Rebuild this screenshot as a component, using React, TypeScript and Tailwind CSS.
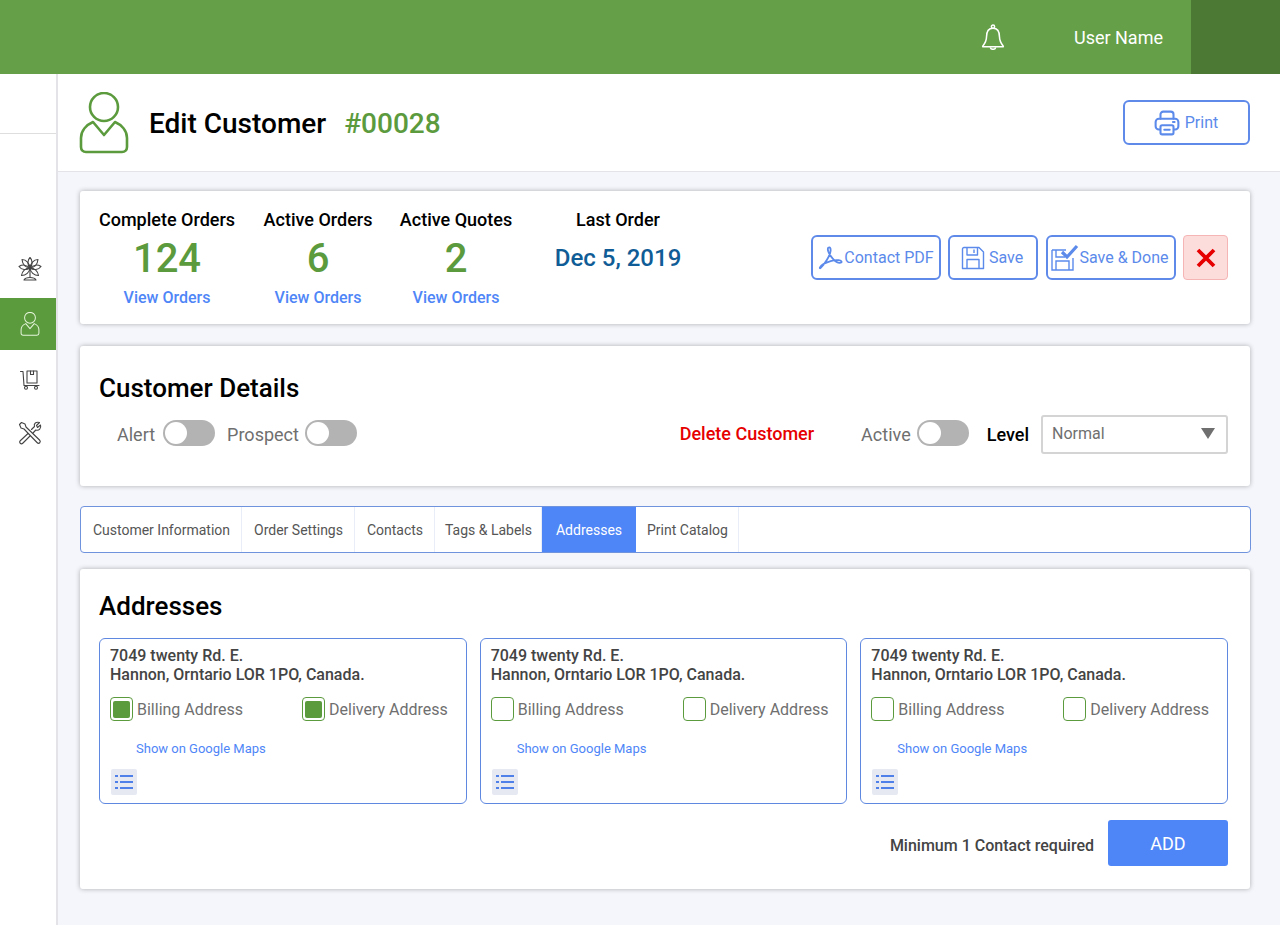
const font = "font-['Roboto',sans-serif]";

function UserIcon({ className }: { className?: string }) {
  return (
    <svg viewBox="0 0 50 62" fill="none" stroke="currentColor" strokeWidth="2.6" strokeLinejoin="round" strokeLinecap="round" className={className}>
      <circle cx="25" cy="15" r="14" />
      <path d="M14 30 L25 43 L36 30 C43 33 48 39 48 46 V55 C48 58 46 60 43 60 H7 C4 60 2 58 2 55 V46 C2 39 7 33 14 30 Z" />
    </svg>
  );
}

function BellIcon() {
  return (
    <svg viewBox="0 0 24 24" fill="none" stroke="white" strokeWidth="1.4" strokeLinejoin="round" className="h-[26px] w-[26px]">
      <circle cx="12" cy="2.500" r="1.500" />
      <path d="M12 4 C7.500 4 6 8 6 12 C6 16 4.500 18 2.500 20.500 V21 H21.500 V20.500 C19.500 18 18 16 18 12 C18 8 16.500 4 12 4 Z" />
      <path d="M9.500 21.500 C10 24 14 24 14.500 21.500" />
    </svg>
  );
}

function PrintIcon() {
  return (
    <svg viewBox="0 0 24 24" fill="none" stroke="currentColor" strokeWidth="1.900" strokeLinejoin="round" strokeLinecap="round" className="h-[26px] w-[26px]">
      <path d="M6 8 V4 A2.500 2.500 0 0 1 8.500 1.500 H15.500 A2.500 2.500 0 0 1 18 4 V8" />
      <rect x="1.500" y="8" width="21" height="10" rx="3" />
      <rect x="6" y="14" width="12" height="8.500" rx="1.500" fill="white" />
      <path d="M9.500 18.200 H14.500 M17.500 11 H19" />
    </svg>
  );
}

function PlantIcon() {
  return (
    <svg viewBox="0 0 24 24" fill="none" stroke="#444" strokeWidth="1.100" strokeLinejoin="round" className="h-[24px] w-[24px]">
      <path d="M12 11 C9 7.500 9.500 3 12 0.500 C14.500 3 15 7.500 12 11 Z" />
      <path d="M12 11 C7.500 10.500 4.500 7 4 2.500 C8.500 2.500 11.500 6.500 12 11 Z" />
      <path d="M12 11 C16.500 10.500 19.500 7 20 2.500 C15.500 2.500 12.500 6.500 12 11 Z" />
      <path d="M12 11 C8.500 7.500 4 7.500 1 9.500 C3.500 13 8.500 13.500 12 11 Z" />
      <path d="M12 11 C15.500 7.500 20 7.500 23 9.500 C20.500 13 15.500 13.500 12 11 Z" />
      <path d="M12 11 C7.500 11 4 14 3.500 18.500 C8 18.500 11.500 15.500 12 11 Z" />
      <path d="M12 11 C16.500 11 20 14 20.500 18.500 C16 18.500 12.500 15.500 12 11 Z" />
      <path d="M12 11 V20 M6 23 H18 C17 21 14.500 20.500 12 20.500 C9.500 20.500 7 21 6 23 Z" />
    </svg>
  );
}

function CartIcon() {
  return (
    <svg viewBox="0 0 20 20" fill="none" stroke="#444" strokeWidth="1.100" strokeLinejoin="round" strokeLinecap="round" className="h-[20px] w-[20px]">
      <path d="M0.500 1.500 H3 L4 15.500 H19" />
      <rect x="7" y="1" width="10" height="12" />
      <path d="M10.500 1 V4.500 H13.500 V1" />
      <circle cx="6" cy="17.800" r="1.500" />
      <circle cx="16" cy="17.800" r="1.500" />
    </svg>
  );
}

function ToolsIcon() {
  return (
    <svg viewBox="0 0 24 24" fill="none" stroke="#444" strokeWidth="1.100" strokeLinejoin="round" strokeLinecap="round" className="h-[24px] w-[24px]">
      <path d="M3.500 1.500 L1.500 3.500 L3 7 L6 8 L19 21.500 C21 23.500 23.500 21 21.500 19 L8 6 L7 3 Z" />
      <path d="M13.500 8.500 L16.500 5.500 C15.500 2.500 18 0.500 21.500 1.500 L18.500 4.500 L19.500 6.500 L22.500 4 C23.500 7.500 21 10 17.800 9 L15 12" />
      <path d="M10 12.500 L2.500 19.500 C0.500 21.500 3 24 5 22 L12 15" />
    </svg>
  );
}

function PdfIcon() {
  return (
    <svg viewBox="0 0 24 24" fill="none" stroke="currentColor" strokeWidth="1.700" strokeLinejoin="round" className="h-[26px] w-[26px]">
      <path d="M9.500 2.500 C11 1.500 12 3 11.500 6 C11 10 6 18 2.500 21 C1 22.500 1.500 19.500 5 17.500 C9 15.500 15 13.500 19 14 C22.500 14.500 22.500 16.500 20 16.500 C16 16.500 11 10 9.500 6 C9 4.500 9 3 9.500 2.500 Z" />
    </svg>
  );
}

function FloppyIcon() {
  return (
    <svg viewBox="0 0 24 24" fill="none" stroke="currentColor" strokeWidth="1.400" strokeLinejoin="round" className="h-[24px] w-[24px]">
      <path d="M3 1.500 H18 L22.500 6 V22.500 H1.500 V3 A1.500 1.500 0 0 1 3 1.500 Z" />
      <path d="M6 1.500 V9 H16.500 V1.500 M13 3.500 V7" />
      <path d="M6 22.500 V13.500 H18 V22.500" />
    </svg>
  );
}

function SaveDoneIcon() {
  return (
    <svg viewBox="0 0 28 28" fill="none" className="h-[28px] w-[28px]">
      <path d="M1 6 H15 M1 6 V26 H22 V14 M5 6 V13 H14 M5 26 V17 H18 V26" stroke="currentColor" strokeWidth="1.400" />
      <path d="M11 8 L16 13 L26 2" stroke="currentColor" strokeWidth="3.200" />
    </svg>
  );
}

function ListIcon() {
  return (
    <svg viewBox="0 0 26 26" fill="none" stroke="#4f7fe8" strokeWidth="2" className="h-[26px] w-[26px]">
      <path d="M4 7 H7 M4 13 H7 M4 19 H7" />
      <path d="M9 7 H22 M9 13 H22 M9 19 H22" />
    </svg>
  );
}

function Stat({ label, value, width }: { label: string; value: string; width: string }) {
  return (
    <div className={`flex flex-col items-center ${width}`}>
      <div className="text-[18px] font-medium leading-[20px] text-black whitespace-nowrap">{label}</div>
      <div className="mt-[7px] text-[40px] font-medium leading-[44px] text-[#5c9a3e]">{value}</div>
      <div className="mt-[8px] text-[16px] font-medium leading-[18px] text-[#4f86f7]">View Orders</div>
    </div>
  );
}

function Toggle() {
  return (
    <div className="flex h-[26px] w-[52px] items-center rounded-full bg-[#b3b3b3] pl-[2px]">
      <div className="h-[22px] w-[22px] rounded-full bg-white" />
    </div>
  );
}

function Check({ label, checked, width }: { label: string; checked: boolean; width: string }) {
  return (
    <div className={`flex items-center gap-[4px] ${width}`}>
      <div className="flex h-[24px] w-[23px] items-center justify-center rounded-[4px] border-[1.5px] border-[#5c9a3e]">
        {checked && <div className="h-[17px] w-[17px] rounded-[2px] bg-[#5c9a3e]" />}
      </div>
      <span className="pt-[2px] text-[16px] leading-[20px] text-[#6f6f6f] whitespace-nowrap">{label}</span>
    </div>
  );
}

function AddressCard({ checked }: { checked: boolean }) {
  return (
    <div className="h-[166px] rounded-[6px] border border-[#5f88e0] px-[10px] pt-[7px]">
      <div className="text-[16px] font-medium leading-[19px] text-[#444] whitespace-nowrap">
        <div>7049 twenty Rd. E.</div>
        <div>Hannon, Orntario LOR 1PO, Canada.</div>
      </div>
      <div className="mt-[13px] flex">
        <Check label="Billing Address" checked={checked} width="w-[192px]" />
        <Check label="Delivery Address" checked={checked} width="w-auto" />
      </div>
      <div className="mt-[20px] pl-[26px] text-[13px] leading-[16px] text-[#4f86f7]">Show on Google Maps</div>
      <div className="ml-[1px] mt-[12px] h-[26px] w-[26px] rounded-[2px] bg-[#e6e9f2]">
        <ListIcon />
      </div>
    </div>
  );
}

const tabs = [
  { name: "Customer Information", width: "w-[161px]" },
  { name: "Order Settings", width: "w-[113px]" },
  { name: "Contacts", width: "w-[80px]" },
  { name: "Tags & Labels", width: "w-[107px]" },
  { name: "Addresses", width: "w-[94px]", active: true },
  { name: "Print Catalog", width: "w-[103px]" },
];

export default function App() {
  return (
    <div className={`${font} h-[925px] w-[1280px] overflow-hidden bg-[#f4f6fb]`}>
      <header className="flex h-[74px] items-center justify-end bg-[#659f47]">
        <BellIcon />
        <span className="ml-[68px] text-[18px] text-white">User Name</span>
        <div className="ml-[28px] h-full w-[89px] bg-[#4c7a34]" />
      </header>
      <div className="flex h-[851px]">
        <aside className="w-[58px] shrink-0 border-r-2 border-[#e4e4e8] bg-white">
          <div className="h-[60px] border-b border-[#dedede]" />
          <div className="flex h-[164px] flex-col justify-end">
            <div className="flex h-[46px] items-center justify-center pb-[12px] pl-[4px]"><PlantIcon /></div>
          </div>
          <div className="flex h-[52px] items-center justify-center bg-[#5c9a3e] pl-[4px] text-[#e4f5da]">
            <UserIcon className="h-[24px] w-[20px]" />
          </div>
          <div className="flex h-[60px] items-center justify-center pl-[4px]"><CartIcon /></div>
          <div className="flex h-[46px] items-center justify-center pl-[4px]"><ToolsIcon /></div>
        </aside>
        <main className="min-w-0 flex-1">
          <div className="flex h-[98px] items-center border-b border-[#e4e4e8] bg-white pl-[21px] pr-[30px]">
            <UserIcon className="h-[62px] w-[50px] text-[#5c9a3e]" />
            <h1 className="ml-[20px] pt-[2px] text-[28px] font-medium text-black">Edit Customer</h1>
            <span className="ml-[18px] pt-[2px] text-[28px] font-medium text-[#5c9a3e]">#00028</span>
            <button className="ml-auto flex h-[45px] w-[127px] items-center justify-center gap-[5px] rounded-[6px] border-2 border-[#5f8aea] pr-[1px] text-[16px] text-[#5b8aeb]">
              <PrintIcon />
              Print
            </button>
          </div>
          <div className="flex flex-col pl-[22px] pr-[30px] pt-[19px]">
            <section className="flex h-[133px] items-center rounded-[3px] bg-white pl-[19px] pr-[22px] shadow-[0_0_5px_rgba(0,0,0,0.3)]">
              <div className="flex self-start pt-[19px]">
                <Stat label="Complete Orders" value="124" width="w-[136px]" />
                <div className="ml-[29px]"><Stat label="Active Orders" value="6" width="w-[108px]" /></div>
                <div className="ml-[28px]"><Stat label="Active Quotes" value="2" width="w-[112px]" /></div>
              </div>
              <div className="ml-[43px] flex w-[126px] flex-col items-center self-start pt-[19px]">
                <div className="text-[18px] font-medium leading-[20px] text-black">Last Order</div>
                <div className="mt-[13px] text-[24px] font-medium leading-[30px] text-[#0f5c96] whitespace-nowrap">Dec 5, 2019</div>
              </div>
              <div className="ml-auto flex items-center text-[16px] text-[#5b8aeb]">
                <button className="flex h-[45px] w-[130px] items-center justify-center rounded-[6px] border-2 border-[#5f8aea]">
                  <PdfIcon />Contact PDF
                </button>
                <button className="ml-[7px] flex h-[45px] w-[90px] items-center justify-center gap-[4px] rounded-[6px] border-2 border-[#5f8aea] pr-[2px]">
                  <FloppyIcon />Save
                </button>
                <button className="ml-[8px] flex h-[45px] w-[130px] items-center justify-center rounded-[6px] border-2 border-[#5f8aea] pr-[2px]">
                  <SaveDoneIcon />Save &amp; Done
                </button>
                <button className="ml-[7px] flex h-[45px] w-[45px] items-center justify-center rounded-[4px] border border-[#f5b5b5] bg-[#fddcdc]">
                  <svg viewBox="0 0 20 20" className="h-[20px] w-[20px]" stroke="#e60000" strokeWidth="3.800"><path d="M2 2 L18 18 M18 2 L2 18" /></svg>
                </button>
              </div>
            </section>
            <section className="mt-[22px] h-[140px] rounded-[3px] bg-white pl-[19px] pr-[22px] pt-[27px] shadow-[0_0_5px_rgba(0,0,0,0.3)]">
              <h2 className="text-[26px] font-medium leading-[30px] text-black">Customer Details</h2>
              <div className="mt-[12px] flex items-center whitespace-nowrap text-[18px] text-[#6f6f6f]">
                <span className="ml-[18px]">Alert</span>
                <span className="ml-[8px] pb-[3px]"><Toggle /></span>
                <span className="ml-[12px]">Prospect</span>
                <span className="ml-[6px] pb-[3px]"><Toggle /></span>
                <span className="ml-auto pb-[2px] text-[18px] font-medium text-[#e60000]">Delete Customer</span>
                <span className="ml-[47px]">Active</span>
                <span className="ml-[6px] pb-[3px]"><Toggle /></span>
                <span className="ml-[18px] font-medium text-black">Level</span>
                <div className="ml-[12px] flex h-[39px] w-[187px] items-center justify-between rounded-[3px] border-2 border-[#d4d4d4] pl-[9px] pr-[11px] pb-[2px] text-[16px]">
                  <span>Normal</span>
                  <span className="h-0 w-0 border-x-[7px] border-t-[11px] border-x-transparent border-t-[#6f6f6f]" />
                </div>
              </div>
            </section>
            <nav className="-mr-[1px] mt-[20px] flex h-[47px] rounded-[4px] border border-[#6f93dd] bg-white text-[14px] text-[#555]">
              {tabs.map((t) => (
                <div
                  key={t.name}
                  className={`flex items-center justify-center border-r pl-[1px] pt-[2px] whitespace-nowrap ${t.width} ${t.active ? "border-[#4f86f7] bg-[#4f86f7] text-white" : "border-[#e8edf7]"}`}
                >
                  {t.name}
                </div>
              ))}
            </nav>
            <section className="mt-[16px] h-[320px] rounded-[3px] bg-white pl-[19px] pr-[22px] pt-[21px] shadow-[0_0_5px_rgba(0,0,0,0.3)]">
              <h2 className="text-[26px] font-medium leading-[32px] text-black">Addresses</h2>
              <div className="mt-[16px] grid grid-cols-3 gap-[13px]">
                <AddressCard checked />
                <AddressCard checked={false} />
                <AddressCard checked={false} />
              </div>
              <div className="mt-[16px] flex items-center justify-end">
                <span className="pt-[6px] text-[16px] font-medium text-[#444]">Minimum 1 Contact required</span>
                <button className="ml-[14px] h-[46px] w-[120px] rounded-[3px] bg-[#4f86f7] text-[18px] text-white">ADD</button>
              </div>
            </section>
          </div>
        </main>
      </div>
    </div>
  );
}
